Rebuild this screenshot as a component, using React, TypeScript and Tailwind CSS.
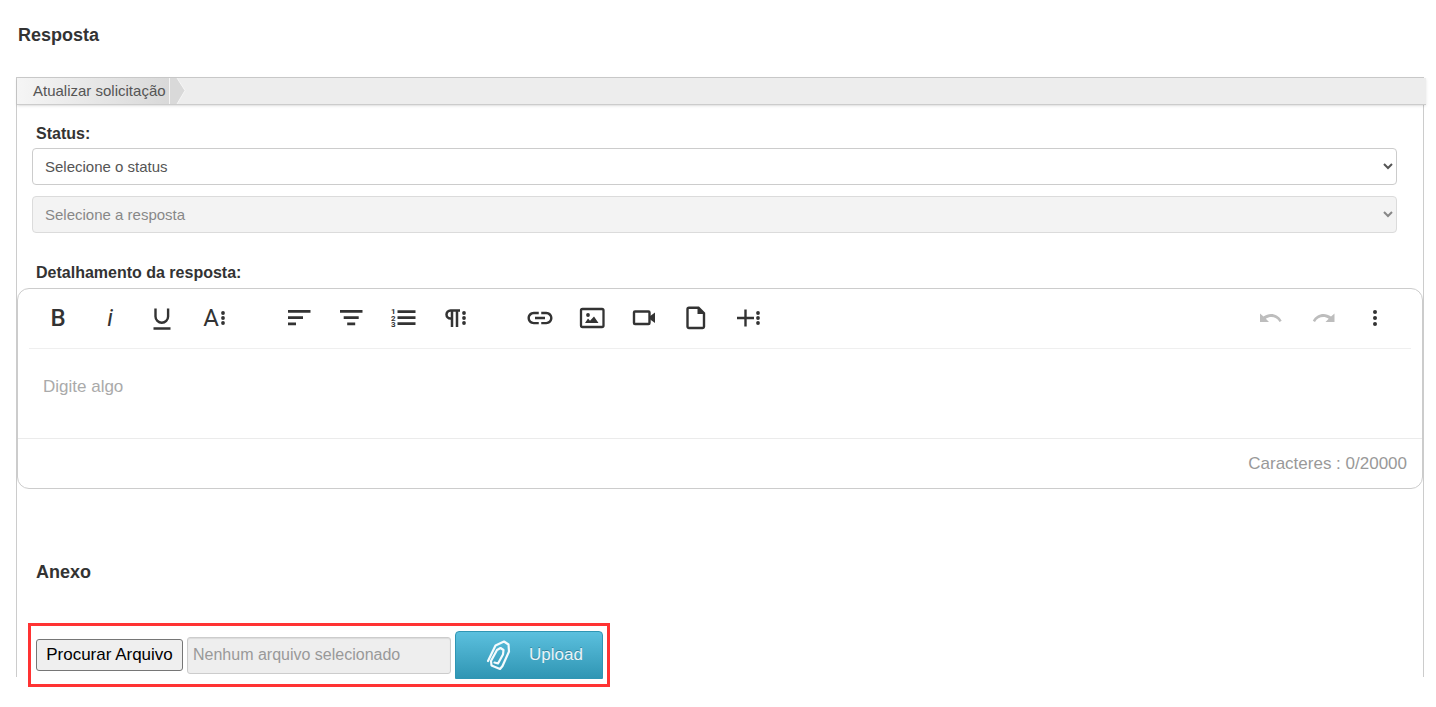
import type { ReactNode } from "react";
import { MdLink } from "react-icons/md";

interface ToolButtonProps {
  label: string;
  disabled?: boolean;
  children: ReactNode;
}

function ToolButton({ label, disabled, children }: ToolButtonProps) {
  return (
    <button
      type="button"
      aria-label={label}
      title={label}
      disabled={disabled}
      className="flex h-10 w-[52px] items-center justify-center text-[#333] disabled:text-[#bdbdbd]"
    >
      {children}
    </button>
  );
}

function Icon({ children }: { children: ReactNode }) {
  return (
    <svg width="30" height="30" viewBox="0 0 30 30" fill="currentColor" aria-hidden="true">
      {children}
    </svg>
  );
}

function Dots() {
  return (
    <svg width="4" height="14" viewBox="0 0 4 14" fill="currentColor" aria-hidden="true">
      <circle cx="2" cy="2" r="1.9" />
      <circle cx="2" cy="7" r="1.9" />
      <circle cx="2" cy="12" r="1.9" />
    </svg>
  );
}

function Toolbar() {
  return (
    <div className="mx-[11px] flex h-[60px] items-center border-b border-[#efefef] pb-[2px] pl-[3px] pr-[10px] font-[Roboto,sans-serif]">
      <div className="mr-[33px] flex">
        <ToolButton label="Negrito">
          <span className="text-2xl font-medium">B</span>
        </ToolButton>
        <ToolButton label="Itálico">
          <span className="text-2xl italic">i</span>
        </ToolButton>
        <ToolButton label="Sublinhado">
          <Icon>
            <path d="M8.500 5.500v8a6.300 6.300 0 0 0 12.600 0v-8M6.500 25.500h17" fill="none" stroke="currentColor" strokeWidth="2.4" />
          </Icon>
        </ToolButton>
        <ToolButton label="Mais texto">
          <span className="flex items-center gap-0.5 text-2xl">
            A
            <Dots />
          </span>
        </ToolButton>
      </div>
      <div className="mr-[33px] flex">
        <ToolButton label="Alinhar à esquerda">
          <Icon>
            <path d="M4 7h22.500v2.800H4zM4 13.200h15v2.800H4zM4 19.500h8v2.800H4z" />
          </Icon>
        </ToolButton>
        <ToolButton label="Centralizar">
          <Icon>
            <path d="M4 7h22.500v2.800H4zM7.700 13.200h15v2.800h-15zM11.200 19.500h8v2.800h-8z" />
          </Icon>
        </ToolButton>
        <ToolButton label="Lista ordenada">
          <Icon>
            <path d="M9.500 7.200h18V10h-18zM9.500 13.300h18v2.800h-18zM9.500 19.300h18v2.800h-18z" />
            <g fontSize="8" fontWeight="bold">
              <text x="3" y="11">1</text>
              <text x="3" y="17.500">2</text>
              <text x="3" y="24">3</text>
            </g>
          </Icon>
        </ToolButton>
        <ToolButton label="Mais parágrafo">
          <span className="flex items-center gap-0.5">
            <svg width="15" height="18" viewBox="0 0 15 18" fill="none" stroke="currentColor" strokeWidth="2.5" aria-hidden="true">
              <path d="M15 1.500H5.500a4 4 0 0 0 0 8H7M7 1.500V18M12 1.500V18" />
            </svg>
            <Dots />
          </span>
        </ToolButton>
      </div>
      <div className="flex">
        <ToolButton label="Inserir link">
          <MdLink size={30} />
        </ToolButton>
        <ToolButton label="Inserir imagem">
          <Icon>
            <rect x="4" y="6" width="22.5" height="18" rx="1.5" fill="none" stroke="currentColor" strokeWidth="2.3" />
            <circle cx="11" cy="12" r="1.9" />
            <path d="M8 20l3-4.500 2 2.200 4-4.200 4.500 6.500z" />
          </Icon>
        </ToolButton>
        <ToolButton label="Inserir vídeo">
          <Icon>
            <rect x="5" y="8.500" width="15.500" height="12.500" rx="1" fill="none" stroke="currentColor" strokeWidth="2.4" />
            <path d="M20.500 13.500l5.500-4v10.500l-5.500-4z" />
          </Icon>
        </ToolButton>
        <ToolButton label="Enviar arquivo">
          <Icon>
            <path
              d="M8 4.800h9.500l5.500 5.500V23.500a1.500 1.500 0 0 1-1.500 1.500H8a1.500 1.500 0 0 1-1.500-1.500V6.300A1.500 1.500 0 0 1 8 4.800z"
              fill="none"
              stroke="currentColor"
              strokeWidth="2.4"
            />
            <path d="M16.500 4.500v6.500h7z" />
          </Icon>
        </ToolButton>
        <ToolButton label="Mais recursos">
          <span className="flex items-center gap-0.5">
            <svg width="17" height="18" viewBox="0 0 17 18" stroke="currentColor" strokeWidth="2.4" aria-hidden="true">
              <path d="M0 9h17M8.500 0.500v17" />
            </svg>
            <Dots />
          </span>
        </ToolButton>
      </div>
      <div className="ml-auto flex">
        <ToolButton label="Desfazer" disabled>
          <Icon>
            <path d="M4 10.500v8.500h9l-3.200-3.300c4.500-3.200 11-2 13.700 3.300l2.200-1.200C22 10.500 13.500 9 7.500 13.500z" />
          </Icon>
        </ToolButton>
        <ToolButton label="Refazer" disabled>
          <Icon>
            <path d="M26.500 10.500v8.500h-9l3.200-3.300c-4.500-3.200-11-2-13.700 3.300l-2.200-1.200C8.500 10.500 17 9 23 13.500z" />
          </Icon>
        </ToolButton>
        <ToolButton label="Mais opções">
          <svg width="4" height="18" viewBox="0 0 4 18" fill="currentColor" aria-hidden="true">
            <circle cx="2" cy="3" r="2" />
            <circle cx="2" cy="9" r="2" />
            <circle cx="2" cy="15" r="2" />
          </svg>
        </ToolButton>
      </div>
    </div>
  );
}

function Editor() {
  return (
    <div className="overflow-hidden rounded-xl border border-[#ccc] bg-white">
      <Toolbar />
      <textarea
        id="detalhamento"
        placeholder="Digite algo"
        className="block h-[89px] w-full resize-none px-[25px] pt-[26px] text-[17px] leading-6 outline-none placeholder:text-[#aaa]"
      />
      <div className="flex h-[50px] items-center justify-end border-t border-[#ebebeb] px-[15px] text-[17px] text-[#999]">
        Caracteres : 0/20000
      </div>
    </div>
  );
}

function Upload() {
  return (
    <div className="-mb-[10px] ml-[11px] flex h-16 w-[582px] items-center border-[3px] border-[#ff3333] px-[5px]">
      <button
        type="button"
        className="h-8 w-[147px] shrink-0 rounded-[3px] border border-[#767676] bg-[#efefef] text-[17px] text-black"
      >
        Procurar Arquivo
      </button>
      <input
        type="text"
        aria-label="Arquivo selecionado"
        placeholder="Nenhum arquivo selecionado"
        disabled
        className="ml-1 h-[37px] w-[264px] shrink-0 rounded-[3px] border border-[#ccc] bg-[#eee] px-[5px] text-base shadow-[inset_0_1px_1px_rgba(0,0,0,0.08)] placeholder:text-[#999]"
      />
      <button
        type="button"
        className="ml-1 flex h-12 w-[148px] shrink-0 items-center rounded-t border border-[#2f96b4] bg-linear-to-b from-[#5bc0de] to-[#2f96b4] pl-[30px] text-[17px] text-[#e8f4f8] [text-shadow:0_-1px_0_rgba(0,0,0,0.25)]"
      >
        <svg
          width="25"
          height="32"
          viewBox="0 0 25 32"
          fill="none"
          stroke="#f4fbfd"
          strokeWidth="2.2"
          strokeLinejoin="round"
          strokeLinecap="round"
          aria-hidden="true"
        >
          <path d="M2 22L9.500 6.500 18 2.500l4.500 3 .5 7-6.500 14.500-2.500 3-8.500-3.500L5 22l6-11 3.500-2 3 2-.5 4.500-5 9-3.500-1" />
        </svg>
        <span className="ml-[18px]">Upload</span>
      </button>
    </div>
  );
}

export default function App() {
  return (
    <main className="bg-white pb-5 pl-4 pr-3 pt-[23px] font-['Liberation_Sans',Arial,sans-serif] text-[#333]">
      <h1 className="ml-[2px] text-lg leading-6 font-bold">Resposta</h1>
      <section className="mt-[30px] flow-root border-x border-t border-[#ccc]">
        <nav className="-mr-[3px] flex h-[27px] border-b border-[#ccc] bg-[#ededed] shadow-sm">
          <a
            href="#solicitacao"
            className="flex items-center bg-linear-to-r from-[#f5f5f5] to-[#d9d9d9] pl-4 pr-[3px] text-[15px] text-[#555]"
          >
            Atualizar solicitação
          </a>
          <svg width="17" height="26" viewBox="0 0 17 26" aria-hidden="true">
            <path d="M0 0h8l8 12.500-8 13.500H0z" fill="#d9d9d9" />
            <path d="M.5 0v26M8 0l8 12.500-8 13.500" fill="none" stroke="#f5f5f5" />
          </svg>
        </nav>
        <div className="pl-[15px] pr-[26px] pt-[17px]">
          <label htmlFor="status" className="ml-1 block text-base leading-6 font-bold">
            Status:
          </label>
          <select
            id="status"
            className="mt-[2px] block h-[37px] w-full rounded border border-[#ccc] bg-white px-2 text-[15px] text-[#555]"
          >
            <option>Selecione o status</option>
          </select>
          <select
            aria-label="Resposta"
            disabled
            className="mt-[11px] block h-[37px] w-full rounded border border-[#ccc] bg-[#eee] px-2 text-[15px] text-[#555] opacity-70"
          >
            <option>Selecione a resposta</option>
          </select>
          <label htmlFor="detalhamento" className="mt-7 ml-1 block text-base leading-6 font-bold">
            Detalhamento da resposta:
          </label>
        </div>
        <div className="mt-[3px]">
          <Editor />
        </div>
        <h2 className="mt-[71px] ml-[19px] text-lg leading-6 font-bold">Anexo</h2>
        <div className="mt-[39px]">
          <Upload />
        </div>
      </section>
    </main>
  );
}
